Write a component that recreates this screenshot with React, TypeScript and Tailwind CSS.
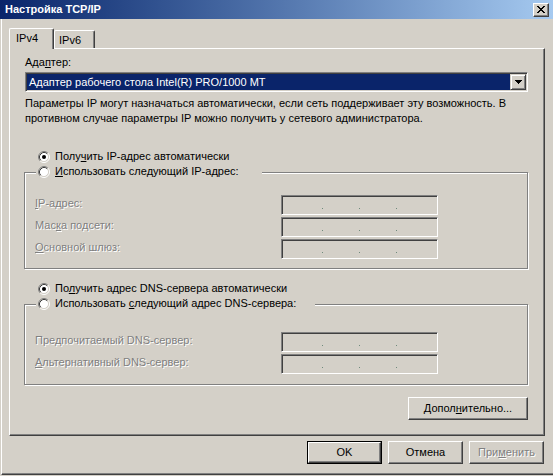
import React from 'react';

function Radio({ checked }: { checked?: boolean }) {
  return (
    <svg width="12" height="12" viewBox="0 0 12 12" className="shrink-0">
      <circle cx="6" cy="6" r="4.5" fill="#fff" />
      <path d="M2.11 9.89A5.5 5.5 0 0 1 9.89 2.11" fill="none" stroke="#808080" />
      <path d="M9.89 2.11A5.5 5.5 0 0 1 2.11 9.89" fill="none" stroke="#fff" />
      <path d="M2.82 9.18A4.5 4.5 0 0 1 9.18 2.82" fill="none" stroke="#404040" />
      <path d="M9.18 2.82A4.5 4.5 0 0 1 2.82 9.18" fill="none" stroke="#d4d0c8" />
      {checked && <circle cx="6" cy="6" r="2" fill="#000" />}
    </svg>
  );
}

function U({ children }: { children: React.ReactNode }) {
  return <span className="underline">{children}</span>;
}

function RadioRow({
  checked,
  children,
  className = '',
}: {
  checked?: boolean;
  children: React.ReactNode;
  className?: string;
}) {
  return (
    <div className={`flex h-[13px] items-center gap-[5px] ${className}`}>
      <Radio checked={checked} />
      <span className="whitespace-nowrap">{children}</span>
    </div>
  );
}

function IpField() {
  return (
    <div className="flex h-[20px] w-[157px] shrink-0 items-start gap-[36px] border border-t-[#808080] border-l-[#808080] border-r-white border-b-white pl-[40px] pt-[12px] shadow-[inset_1px_1px_0_#404040,inset_-1px_-1px_0_#d4d0c8]">
      <span className="h-px w-px bg-[#6f8a7c]" />
      <span className="h-px w-px bg-[#6f8a7c]" />
      <span className="h-px w-px bg-[#6f8a7c]" />
    </div>
  );
}

function FieldRow({ children }: { children: React.ReactNode }) {
  return (
    <div className="flex items-start">
      <span className="ml-[10px] w-[246px] pt-[2px] text-[#808080] [text-shadow:1px_1px_0_#fff]">{children}</span>
      <IpField />
    </div>
  );
}

function Button({
  children,
  width = 'w-[75px]',
  isDefault,
  disabled,
}: {
  children: React.ReactNode;
  width?: string;
  isDefault?: boolean;
  disabled?: boolean;
}) {
  const face = (
    <div className="flex h-full w-full items-center justify-center border border-t-white border-l-white border-r-[#404040] border-b-[#404040] shadow-[inset_-1px_-1px_0_#808080]">
      <span className={disabled ? 'text-[#808080] [text-shadow:1px_1px_0_#fff]' : ''}>{children}</span>
    </div>
  );
  return (
    <div className={`h-[23px] ${width} ${isDefault ? 'border border-black' : ''}`}>{face}</div>
  );
}

export default function App() {
  return (
    <div className="flex h-[476px] w-[553px] flex-col overflow-hidden bg-[#d4d0c8] font-['Liberation_Sans',Arial,sans-serif] text-[11px] leading-[13px] text-black">
      {/* Title bar */}
      <div className="flex h-[19px] shrink-0 items-center justify-between bg-gradient-to-r from-[#0a246a] to-[#a6caf0] pl-[5px] pr-[4px]">
        <span className="font-bold text-white">Настройка TCP/IP</span>
        <div className="flex h-[14px] w-[16px] items-center justify-center border border-t-white border-l-white border-r-[#404040] border-b-[#404040] bg-[#d4d0c8] shadow-[inset_-1px_-1px_0_#808080]">
          <svg width="8" height="7" viewBox="0 0 8 7" shapeRendering="crispEdges">
            <path
              fill="#000"
              d="M0 0h2v1H0zM6 0h2v1H6zM1 1h2v1H1zM5 1h2v1H5zM2 2h4v1H2zM3 3h2v1H3zM2 4h4v1H2zM1 5h2v1H1zM5 5h2v1H5zM0 6h2v1H0zM6 6h2v1H6z"
            />
          </svg>
        </div>
      </div>

      {/* Body */}
      <div className="mb-[1px] ml-[1px] flex flex-1 flex-col border-l border-b border-l-white border-b-[#404040] shadow-[inset_0_-1px_0_#808080]">
        {/* Tabs */}
        <div className="ml-[7px] mt-[9px] flex h-[20px] items-start">
          <div className="relative z-10 h-[21px] w-[45px] rounded-t-[2px] border-l border-t border-r border-l-white border-t-white border-r-[#404040] bg-[#d4d0c8] pl-[6px] pt-[3px] shadow-[inset_-1px_0_0_#808080]">
            IPv4
          </div>
          <div className="mt-[2px] h-[18px] w-[41px] rounded-t-[2px] border-l border-t border-r border-l-white border-t-white border-r-[#404040] pl-[4px] pt-[3px] shadow-[inset_-1px_0_0_#808080]">
            IPv6
          </div>
        </div>

        {/* Tab page */}
        <div className="ml-[7px] flex h-[388px] w-[536px] flex-col border border-t-white border-l-white border-r-[#404040] border-b-[#404040] pl-[14px] shadow-[inset_-1px_-1px_0_#808080]">
          <div className="ml-[1px] mt-[7px]">
            Ада<U>п</U>тер:
          </div>

          {/* Adapter combo */}
          <div className="ml-[1px] mt-[3px] flex h-[20px] w-[503px] border border-t-[#808080] border-l-[#808080] border-r-white border-b-white p-[1px] shadow-[inset_1px_1px_0_#404040,inset_-1px_-1px_0_#d4d0c8]">
            <div className="flex-1 bg-[#0a246a] pl-[2px] leading-[16px] text-white">
              Адаптер рабочего стола Intel(R) PRO/1000 MT
            </div>
            <div className="flex h-[16px] w-[16px] items-center justify-center border border-t-[#d4d0c8] border-l-[#d4d0c8] border-r-[#404040] border-b-[#404040] shadow-[inset_1px_1px_0_#fff,inset_-1px_-1px_0_#808080]">
              <svg width="7" height="4" viewBox="0 0 7 4" shapeRendering="crispEdges">
                <path fill="#000" d="M0 0h7v1H0zM1 1h5v1H1zM2 2h3v1H2zM3 3h1v1H3z" />
              </svg>
            </div>
          </div>

          <p className="ml-[1px] mt-[4px] leading-[15px]">
            Параметры IP могут назначаться автоматически, если сеть поддерживает эту возможность. В
            <br />
            противном случае параметры IP можно получить у сетевого администратора.
          </p>

          <RadioRow checked className="ml-[14px] mt-[24px]">
            Полу<U>ч</U>ить IP-адрес автоматически
          </RadioRow>

          {/* IP group */}
          <div className="mt-[9px] flex h-[97px] w-[504px] flex-col border border-[#808080] shadow-[inset_1px_1px_0_#fff,1px_1px_0_#fff]">
            <div className="-mt-[8px] ml-[11px] w-[226px] bg-[#d4d0c8] pl-[2px]">
              <RadioRow>
                <U>И</U>спользовать следующий IP-адрес:
              </RadioRow>
            </div>
            <div className="mt-[17px] flex flex-col gap-[2px]">
              <FieldRow>
                <U>I</U>P-адрес:
              </FieldRow>
              <FieldRow>
                Мас<U>к</U>а подсети:
              </FieldRow>
              <FieldRow>
                <U>О</U>сновной шлюз:
              </FieldRow>
            </div>
          </div>

          <RadioRow checked className="ml-[14px] mt-[13px]">
            По<U>л</U>учить адрес DNS-сервера автоматически
          </RadioRow>

          {/* DNS group */}
          <div className="mt-[9px] flex h-[81px] w-[504px] flex-col border border-[#808080] shadow-[inset_1px_1px_0_#fff,1px_1px_0_#fff]">
            <div className="-mt-[8px] ml-[11px] w-[279px] bg-[#d4d0c8] pl-[2px]">
              <RadioRow>
                Использовать <U>с</U>ледующий адрес DNS-сервера:
              </RadioRow>
            </div>
            <div className="mt-[22px] flex flex-col gap-[2px]">
              <FieldRow>
                Пре<U>д</U>почитаемый DNS-сервер:
              </FieldRow>
              <FieldRow>
                <U>А</U>льтернативный DNS-сервер:
              </FieldRow>
            </div>
          </div>

          <div className="ml-[384px] mt-[12px]">
            <Button width="w-[120px]">
              Допол<U>н</U>ительно...
            </Button>
          </div>
        </div>

        {/* Dialog buttons */}
        <div className="ml-[305px] mt-[5px] flex gap-[6px]">
          <Button isDefault>OK</Button>
          <Button>Отмена</Button>
          <Button disabled>
            При<U>м</U>енить
          </Button>
        </div>
      </div>
    </div>
  );
}
